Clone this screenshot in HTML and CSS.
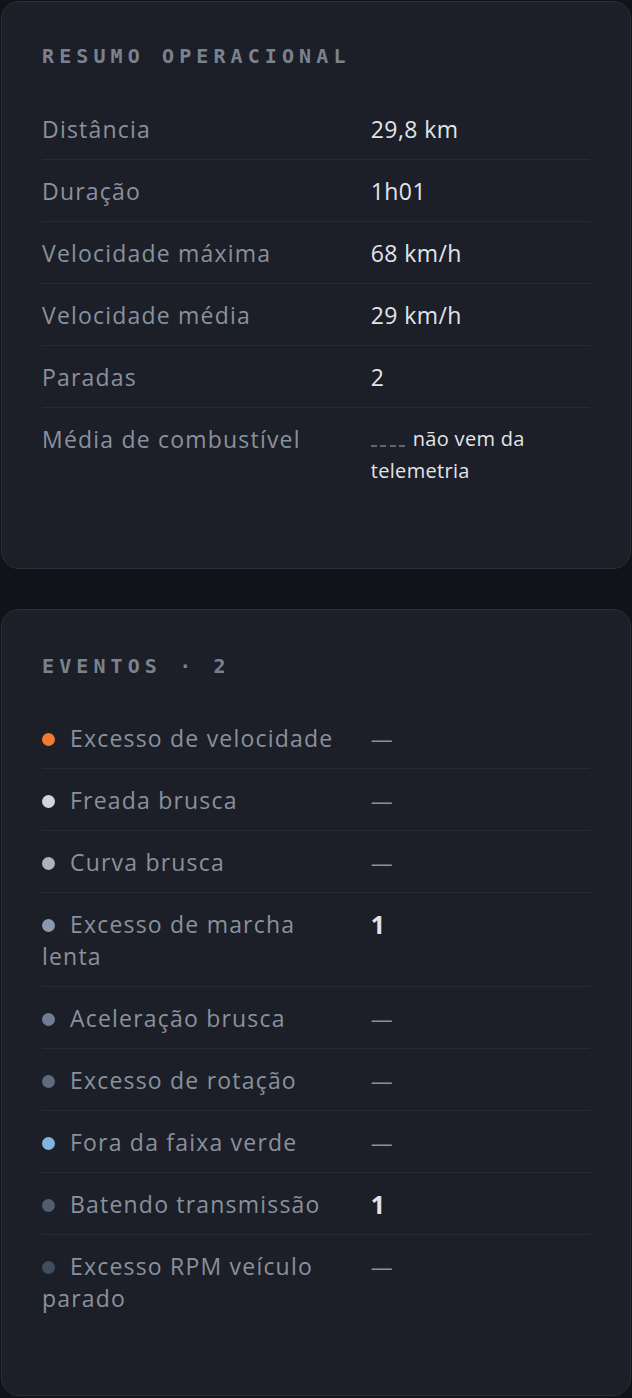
FILE: index.html
```html
<!DOCTYPE html>
<html lang="pt-BR">
<head>
    <meta charset="UTF-8">
    <meta name="viewport" content="width=device-width, initial-scale=1.0">
    <title>Resumo da viagem</title>
    <link rel="stylesheet" href="styles.css">
</head>
<body>
    <div class="page">
        <section class="card">
            <h3 class="card-title">Resumo operacional</h3>
            <div class="row">
                <span class="label">Distância</span>
                <span class="value">29,8 km</span>
            </div>
            <div class="row">
                <span class="label">Duração</span>
                <span class="value">1h01</span>
            </div>
            <div class="row">
                <span class="label">Velocidade máxima</span>
                <span class="value">68 km/h</span>
            </div>
            <div class="row">
                <span class="label">Velocidade média</span>
                <span class="value">29 km/h</span>
            </div>
            <div class="row">
                <span class="label">Paradas</span>
                <span class="value">2</span>
            </div>
            <div class="row">
                <span class="label">Média de combustível</span>
                <span class="value note"><i class="dashes"></i>não vem da telemetria</span>
            </div>
        </section>

        <section class="card events">
            <h3 class="card-title">Eventos · 2</h3>
            <div class="row">
                <span class="label"><i class="dot speed"></i>Excesso de velocidade</span>
                <span class="count">—</span>
            </div>
            <div class="row">
                <span class="label"><i class="dot brake"></i>Freada brusca</span>
                <span class="count">—</span>
            </div>
            <div class="row">
                <span class="label"><i class="dot curve"></i>Curva brusca</span>
                <span class="count">—</span>
            </div>
            <div class="row">
                <span class="label"><i class="dot idle"></i>Excesso de marcha lenta</span>
                <span class="count hit">1</span>
            </div>
            <div class="row">
                <span class="label"><i class="dot accel"></i>Aceleração brusca</span>
                <span class="count">—</span>
            </div>
            <div class="row">
                <span class="label"><i class="dot rpm"></i>Excesso de rotação</span>
                <span class="count">—</span>
            </div>
            <div class="row">
                <span class="label"><i class="dot green"></i>Fora da faixa verde</span>
                <span class="count">—</span>
            </div>
            <div class="row">
                <span class="label"><i class="dot gear"></i>Batendo transmissão</span>
                <span class="count hit">1</span>
            </div>
            <div class="row">
                <span class="label"><i class="dot parked"></i>Excesso RPM veículo parado</span>
                <span class="count">—</span>
            </div>
        </section>
    </div>
</body>
</html>
```

FILE: styles.css
```css
body {
    margin: 0;
    background-color: #111319;
    font-family: "Open Sans", "Noto Sans", sans-serif;
}
.page {
    display: flex;
    flex-direction: column;
    gap: 40px;
    padding: 1px 1px 0;
}
.card {
    background: #1c1f27;
    border: 1px solid #2b2f39;
    border-radius: 18px;
    padding: 40px 40px 67px;
}
.card-title {
    margin: 0 0 28px;
    font-family: "DejaVu Sans Mono", monospace;
    font-size: 20px;
    font-weight: bold;
    line-height: 28px;
    letter-spacing: 5.1px;
    text-transform: uppercase;
    color: #7b828f;
}
.events .card-title { margin: 2px 0 27px; }
.row {
    display: grid;
    grid-template-columns: 60% 40%;
    padding: 15px 0 14px;
    line-height: 32px;
    border-bottom: 1px solid #272b34;
}
.row:last-child { border-bottom: none; }
.label {
    padding-right: 16px;
    font-size: 23px;
    letter-spacing: 1.2px;
    color: #8a919e;
}
.value {
    font-size: 23px;
    letter-spacing: 0.4px;
    color: #e1e4ea;
}
.value.note {
    font-size: 20px;
    letter-spacing: 0.3px;
}
/* placeholder for missing data */
.dashes {
    display: inline-block;
    width: 35px;
    height: 2px;
    margin-right: 7px;
    background: repeating-linear-gradient(to right, #5f6673 0 6px, transparent 6px 9.5px);
    vertical-align: -1px;
}
.dot {
    display: inline-block;
    width: 13px;
    height: 13px;
    margin-right: 15px;
    border-radius: 50%;
    vertical-align: 1px;
}
.dot.speed { background: #f07b2f; }
.dot.brake { background: #d0d4dc; }
.dot.curve { background: #aab3c2; }
.dot.idle { background: #8c99ad; }
.dot.accel { background: #6f7c92; }
.dot.rpm { background: #5d6a80; }
.dot.green { background: #80b3e2; }
.dot.gear { background: #4f5e71; }
.dot.parked { background: #3f4d5f; }
.count {
    font-size: 22px;
    color: #8a919e;
}
.count.hit {
    font-size: 25px;
    font-weight: bold;
    color: #e1e4ea;
}
```
